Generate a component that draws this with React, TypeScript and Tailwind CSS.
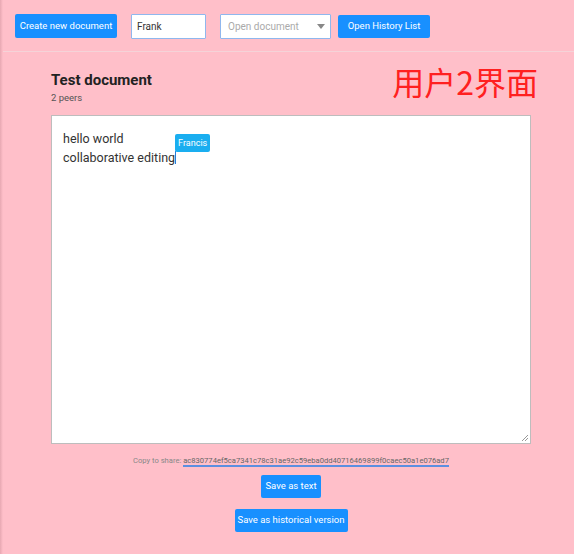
const font = { fontFamily: 'Roboto, "Noto Sans CJK SC", sans-serif' };

export default function App() {
  return (
    <div
      className="relative h-[554px] w-[574px] overflow-hidden bg-[#ffbfc9] text-[#333]"
      style={font}
    >
      <div className="absolute inset-y-0 left-0 w-[3px] bg-gradient-to-r from-[#e7a8b2] to-[#ffbfc9]" />

      <header className="flex h-[52px] items-center whitespace-nowrap border-b border-[#f5d3d8] pl-[15px] pt-[1px]">
        <button className="h-[24px] w-[102px] rounded-[2px] bg-[#1890ff] text-[9.5px] text-white">
          Create new document
        </button>
        <input
          defaultValue="Frank"
          className="ml-[14px] h-[25px] w-[75px] rounded-[1px] border border-[#8fb7ee] bg-white px-[5px] text-[10px] text-[#333] outline-none"
        />
        <div className="ml-[14px] flex h-[25px] w-[111px] items-center justify-between rounded-[1px] border border-[#8fb7ee] bg-white pl-[7px] pr-[5px] text-[10px] text-[#aaa]">
          <span>Open document</span>
          <svg width="8" height="5" viewBox="0 0 8 5">
            <path d="M0 0 H8 L4 5 Z" fill="#888" />
          </svg>
        </div>
        <button className="ml-[7px] h-[23px] w-[92px] rounded-[2px] bg-[#1890ff] text-[9.5px] text-white">
          Open History List
        </button>
      </header>

      <main className="ml-[51px] w-[480px]">
        <div className="flex items-start justify-between">
          <div className="pt-[18px]">
            <h1 className="text-[15px] font-bold leading-[20px] text-[#222]">Test document</h1>
            <p className="mt-[1px] text-[9.5px] leading-[14px] text-[#555]">2 peers</p>
          </div>
          <div
            className="-mr-[7px] pt-[10px] text-[32px] leading-[38px] text-[#ff2020]"
            style={{ fontFamily: '"Noto Sans CJK SC", sans-serif' }}
          >
            用户2界面
          </div>
        </div>

        <div className="relative mt-[10px] h-[329px] w-[480px] border border-[#bdbdbd] bg-white px-[11px] pt-[13px] text-[12.5px] leading-[19px] text-[#333]">
          <p>hello world</p>
          <p>
            collaborative editing
            <span className="relative inline-block h-[13px] w-[1px] translate-y-[2px] bg-[#2a7bd6]">
              <span className="absolute -top-[17px] left-0 rounded-[2px] bg-[#1aaef0] px-[3px] py-[1px] text-[9px] leading-[16px] text-white">
                Francis
              </span>
            </span>
          </p>
          <svg className="absolute bottom-[1px] right-[1px]" width="8" height="8" viewBox="0 0 8 8">
            <path d="M7 1 L1 7 M7 4 L4 7" stroke="#999" strokeWidth="1" />
          </svg>
        </div>

        <div className="mt-[10px] flex flex-col items-center whitespace-nowrap">
          <p className="text-[7.6px] leading-[14px] text-[#888]">
            Copy to share:{" "}
            <span className="border-b-2 border-[#5b8fe0] text-[#666]">
              ac830774ef5ca7341c78c31ae92c59eba0dd40716469899f0caec50a1e076ad7
            </span>
          </p>
          <button className="mt-[7px] h-[23px] w-[60px] rounded-[2px] bg-[#1890ff] text-[9.5px] text-white">
            Save as text
          </button>
          <button className="mt-[11px] h-[23px] w-[113px] rounded-[2px] bg-[#1890ff] text-[9.5px] text-white">
            Save as historical version
          </button>
        </div>
      </main>
    </div>
  );
}
